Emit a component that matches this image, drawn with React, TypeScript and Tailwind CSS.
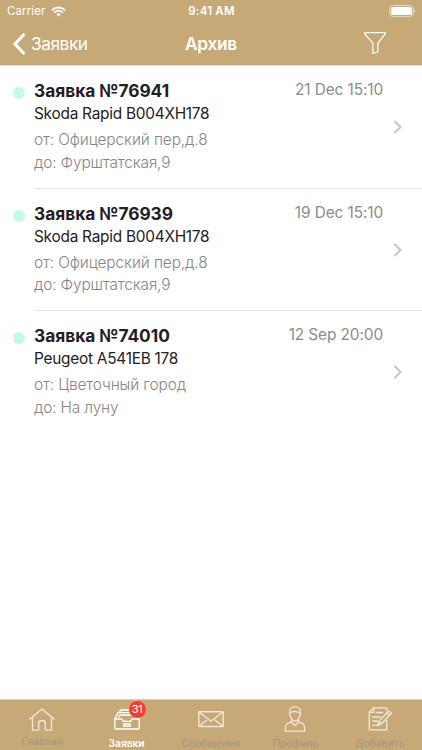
import type { ReactNode } from 'react';

type Order = {
  id: string;
  car: string;
  from: string;
  to: string;
  date: string;
};

const orders: Order[] = [
  { id: '76941', car: 'Skoda Rapid B004XH178', from: 'Офицерский пер,д.8', to: 'Фурштатская,9', date: '21 Dec 15:10' },
  { id: '76939', car: 'Skoda Rapid B004XH178', from: 'Офицерский пер,д.8', to: 'Фурштатская,9', date: '19 Dec 15:10' },
  { id: '74010', car: 'Peugeot A541EB 178', from: 'Цветочный город', to: 'На луну', date: '12 Sep 20:00' },
];

const iconProps = {
  fill: 'none',
  stroke: 'currentColor',
  strokeWidth: 1.35,
  strokeLinejoin: 'round',
  strokeLinecap: 'round',
} as const;

function HomeIcon() {
  return (
    <svg width="28" height="28" viewBox="0 0 28 28" {...iconProps}>
      <path d="M2 14 14 4 26 14" />
      <path d="M4.5 13.5v11.6h6.2v-7.2q0-2.2 2.2-2.2h2.2q2.2 0 2.2 2.2v7.2h6.2V13.5" />
    </svg>
  );
}

function TrayIcon() {
  return (
    <svg width="28" height="28" viewBox="0 0 28 28" {...iconProps}>
      <path d="M1.8 14h7l1.6 2.4h7.200l1.600-2.400h7v8.800q0 1.200-1.200 1.200H3q-1.200 0-1.200-1.200z" />
      <path d="M2 13.600 5 7.600h1.500L7.500 5h15M23 8l3 5.600" />
      <path d="M6.500 7.600h16M5.600 12l1.200-2h15.600l1.200 2" />
      <path d="M10.700 19h6.600v2.200h-6.600z" />
    </svg>
  );
}

function MailIcon() {
  return (
    <svg width="28" height="28" viewBox="0 0 28 28" {...iconProps}>
      <rect x="1.800" y="6.700" width="24.400" height="14.800" rx="0.800" />
      <path d="M2.300 7.300 14 16.200 25.700 7.300M2.300 21l7.400-5.800M25.700 21l-7.400-5.800" />
    </svg>
  );
}

function ProfileIcon() {
  return (
    <svg width="28" height="28" viewBox="0 0 28 28" {...iconProps}>
      <path d="M8.700 8.300C8 4 10 1.800 14 1.800s6 2.200 5.300 6.500c.4 2.200-.3 2.800-.9 3-.6 2.700-2.200 4.500-4.400 4.500s-3.800-1.800-4.400-4.500c-.6-.2-1.300-.8-.9-3z" />
      <path d="M9.200 7.800c1.400-.9 2.800-1.300 4.400-1.200 1.900.1 3.600.6 5.200 1.200" />
      <path d="M10.500 15.400v1.500l-4.300 1.700c-1.300.6-1.900 3.200-1.900 7.500h19.400c0-4.300-.6-6.900-1.900-7.500l-4.300-1.700v-1.500" />
      <path d="m10.500 16.900 3.500 3.500 3.500-3.500" />
    </svg>
  );
}

function EditIcon() {
  return (
    <svg width="28" height="28" viewBox="0 0 28 28" {...iconProps}>
      <path d="M20.700 5.500V2.800H7.700L3.300 7.300v17.600h17.400v-9.400" />
      <path d="M7.700 2.800v4.500H3.300M10.500 7.500h6M6.800 12h7.500M6.800 16h4.400M6.800 20.300h4" />
      <path d="m22.800 6 2.600 2.200-9.800 10.600-4.300 1.900 1.500-4.300zM21 8l2.500 2.200M12.800 16.400l2.800 2.400" />
    </svg>
  );
}

type TabItemProps = {
  label: string;
  active?: boolean;
  badge?: number;
  labelClass?: string;
  children: ReactNode;
};

function TabItem({ label, active, badge, labelClass = 'mt-[3px]', children }: TabItemProps) {
  return (
    <button className={`flex flex-1 flex-col items-center pt-[5px] ${active ? 'text-white' : 'text-[#f2e8da]'}`}>
      <span className="relative">
        {children}
        {badge && (
          <span className="absolute -top-[4px] left-[16px] flex h-[17px] w-[17px] items-center justify-center rounded-full bg-[#f93d31] text-[11px] tracking-[-0.3px] text-white">
            {badge}
          </span>
        )}
      </span>
      <span className={`${labelClass} text-[10.2px] leading-[14px] font-semibold whitespace-nowrap ${active ? 'text-white' : 'text-[#ab9b81]'}`}>
        {label}
      </span>
    </button>
  );
}

function OrderRow({ order, last }: { order: Order; last: boolean }) {
  return (
    <li className="flex h-[122.5px] pl-[13px]">
      <span className="mt-[21px] h-3 w-3 shrink-0 rounded-full bg-[#c1fae7]" />
      <div className={`ml-[9px] flex flex-1 pr-[19px] ${last ? '' : 'border-b border-[#e6e6e8]'}`}>
        <div className="flex-1 whitespace-nowrap pt-[13px]">
          <h2 className="text-[17.3px] leading-[23px] font-bold text-[#1f2026]">Заявка №{order.id}</h2>
          <p className="text-[15.4px] leading-[23px] tracking-[-0.25px] text-[#1f2026]">{order.car}</p>
          <p className="mt-[4px] text-[15.4px] leading-[22.5px] font-light tracking-[-0.1px] text-[#858585]">от: {order.from}</p>
          <p className="text-[15.4px] leading-[22.5px] font-light tracking-[-0.15px] text-[#858585]">до: {order.to}</p>
        </div>
        <time className="mr-[10px] pt-[12px] text-[15.4px] leading-[23px] tracking-[-0.1px] whitespace-nowrap text-[#8c8c8c]">{order.date}</time>
        <svg className="mt-[53px]" width="10" height="16" viewBox="0 0 10 16" fill="none" stroke="#c5c5c8" strokeWidth="2">
          <path d="m1.5 2 6 6-6 6" />
        </svg>
      </div>
    </li>
  );
}

export default function App() {
  return (
    <div className="flex h-[750px] w-[422px] flex-col overflow-hidden bg-white font-['Inter','Liberation_Sans',sans-serif]">
      <header className="h-[66px] border-b border-[#eadfcf] bg-[#c7a977] text-white">
        {/* status bar */}
        <div className="grid h-[22px] grid-cols-3 items-center pr-[6px] pl-[7px] text-[11.5px]">
          <div className="flex items-center gap-[6px]">
            <span className="pt-[2px] tracking-[0.1px]">Carrier</span>
            <svg width="15" height="11" viewBox="0 0 15 11" fill="none" stroke="currentColor" strokeWidth="1.9">
              <path d="M1 4.200c3.700-3.600 9.300-3.600 13 0M3.200 6.600c2.500-2.400 6.100-2.400 8.600 0" />
              <path d="m7.500 10.500-2.200-2.300c1.300-1.200 3.100-1.200 4.400 0z" fill="currentColor" stroke="none" />
            </svg>
          </div>
          <span className="pt-[2px] text-center font-semibold tracking-[0.2px] whitespace-nowrap">9:41 AM</span>
          <svg className="justify-self-end" width="27" height="12" viewBox="0 0 27 12" fill="none">
            <rect x="0.8" y="0.6" width="23.4" height="10.8" rx="2.8" stroke="#e7dbc7" />
            <rect x="2.2" y="2" width="20.6" height="8" rx="1.5" fill="#fff" />
            <path d="M25.200 4.200v3.600c1.400-.6 1.400-3 0-3.600z" fill="#e7dbc7" />
          </svg>
        </div>

        {/* navigation bar */}
        <nav className="grid h-[43px] grid-cols-3 items-center pr-[36px] pl-[12px]">
          <button className="flex items-center gap-[4px]">
            <svg width="15" height="24" viewBox="0 0 15 24" fill="none" stroke="currentColor" strokeWidth="3">
              <path d="M12.500 2 3 12l9.500 10" />
            </svg>
            <span className="text-[17.3px] tracking-[-0.45px]">Заявки</span>
          </button>
          <h1 className="pl-[24px] text-center text-[17.3px] font-semibold tracking-[-0.3px]">Архив</h1>
          <button className="-mt-[2px] justify-self-end">
            <svg width="22" height="24" viewBox="0 0 22 24" fill="none" stroke="currentColor" strokeWidth="1.2" strokeLinejoin="round">
              <path d="M.8 1.700h20.400v1.200l-7.300 9.300v8.600l-5.100 1.700V12.200L.8 2.900z" />
            </svg>
          </button>
        </nav>
      </header>

      <ul className="flex-1">
        {orders.map((order, i) => (
          <OrderRow key={order.id} order={order} last={i === orders.length - 1} />
        ))}
      </ul>

      <footer className="flex h-[51px] border-t border-[#dccdb3] bg-[#c7a977]">
        <TabItem label="Главная" labelClass="mt-[1px]"><HomeIcon /></TabItem>
        <TabItem label="Заявки" active badge={31}><TrayIcon /></TabItem>
        <TabItem label="Сообщения"><MailIcon /></TabItem>
        <TabItem label="Профиль"><ProfileIcon /></TabItem>
        <TabItem label="Добавить"><EditIcon /></TabItem>
      </footer>
    </div>
  );
}
